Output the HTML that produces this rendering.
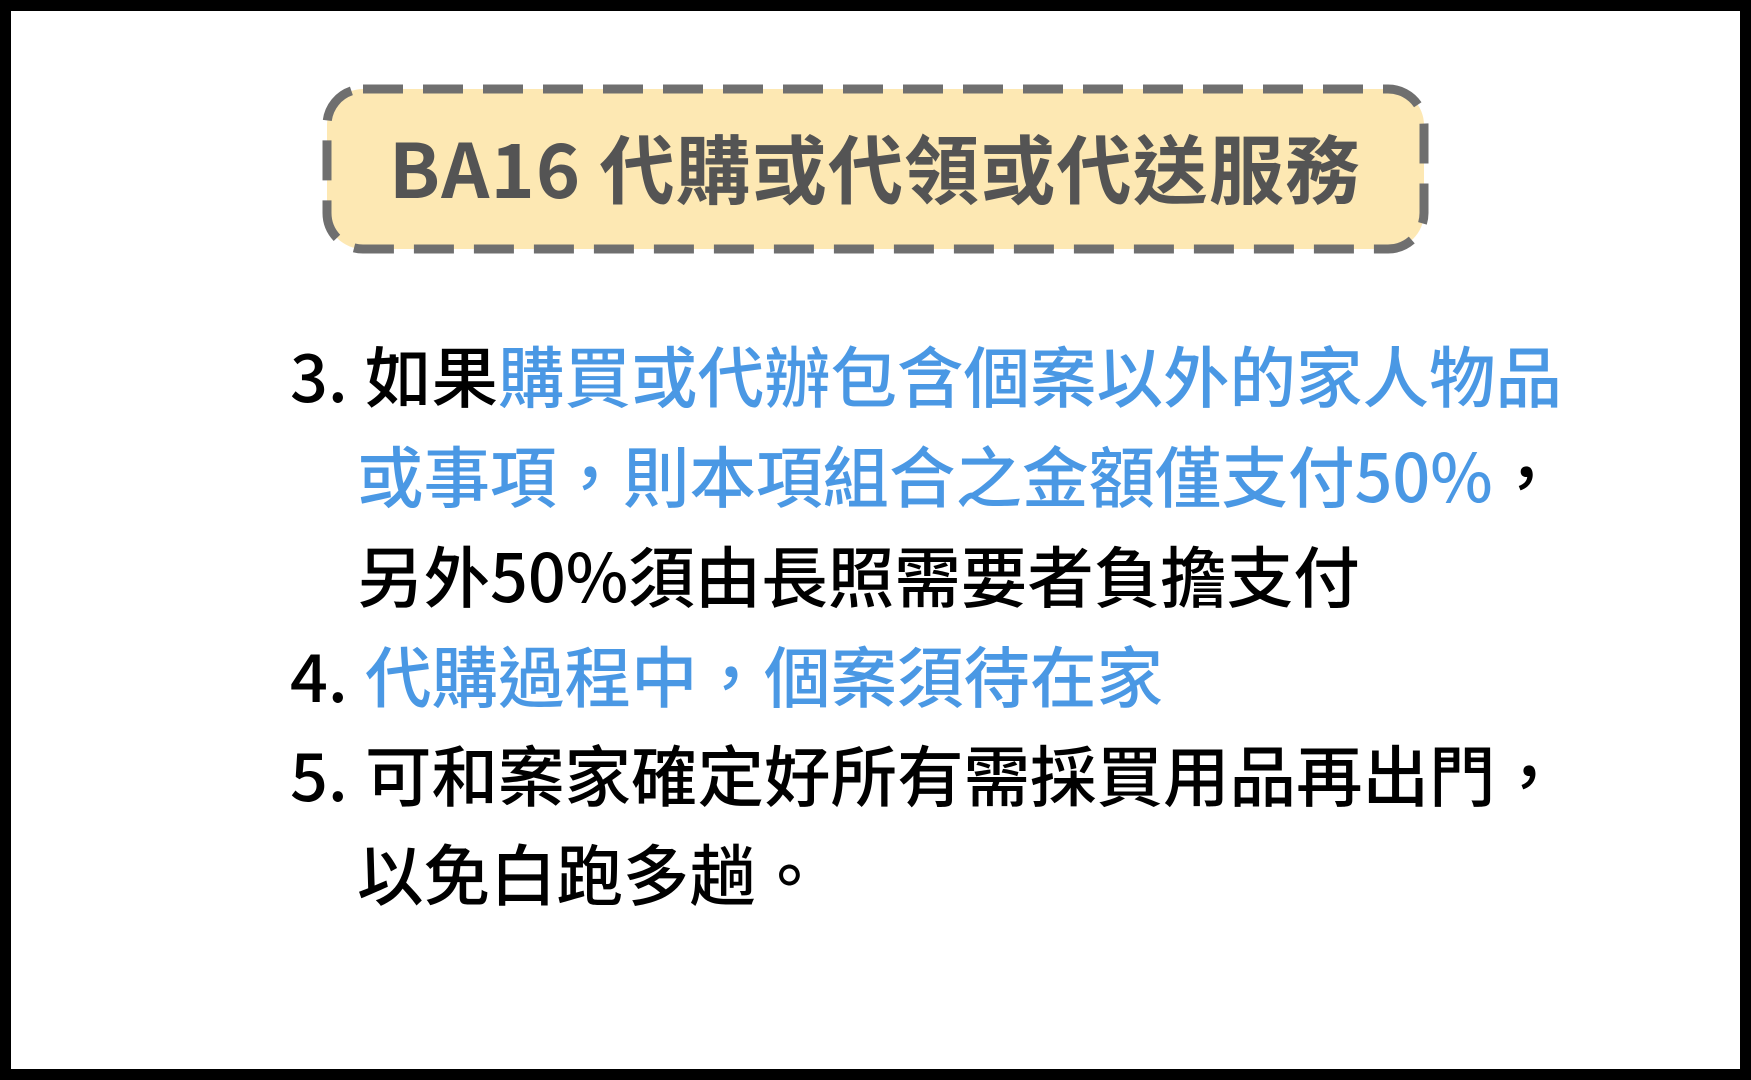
<!DOCTYPE html>
<html><head><meta charset="utf-8"><style>
html,body{margin:0;padding:0;background:#fff;}
svg{display:block;}
text{font-family:"Liberation Sans","Noto Sans CJK TC",sans-serif;}
</style></head><body>
<svg width="1751" height="1080" viewBox="0 0 1751 1080" xmlns="http://www.w3.org/2000/svg">
<rect x="0" y="0" width="1751" height="1080" fill="#000"/>
<rect x="11" y="11" width="1729" height="1058" fill="#fff"/>
<rect x="327" y="89" width="1097" height="160" rx="36" ry="36" fill="#fde8b3" stroke="#6f6f6f" stroke-width="9" stroke-dasharray="40 20"/>
<text x="389" y="198" font-size="75" font-weight="700" fill="#545454" textLength="971" lengthAdjust="spacing" style="font-family:'Noto Sans CJK TC','Liberation Sans',sans-serif">BA16 代購或代領或代送服務</text>
<g font-size="66.5" font-weight="500" fill="#000">
<text x="290" y="402" style="font-family:'Noto Sans CJK TC',sans-serif">3.</text>
<text x="365" y="402" style="font-family:'Noto Sans CJK TC',sans-serif">如果<tspan fill="#4a98e4">購買或代辦包含個案以外的家人物品</tspan></text>
<text x="357" y="502" fill="#4a98e4" style="font-family:'Noto Sans CJK TC',sans-serif">或事項，則本項組合之金額僅支付50%<tspan fill="#000">，</tspan></text>
<text x="357" y="602" style="font-family:'Noto Sans CJK TC',sans-serif">另外50%須由長照需要者負擔支付</text>
<text x="290" y="702" style="font-family:'Noto Sans CJK TC',sans-serif">4.</text>
<text x="365" y="702" fill="#4a98e4" style="font-family:'Noto Sans CJK TC',sans-serif">代購過程中，個案須待在家</text>
<text x="290" y="801" style="font-family:'Noto Sans CJK TC',sans-serif">5.</text>
<text x="365" y="801" style="font-family:'Noto Sans CJK TC',sans-serif">可和案家確定好所有需採買用品再出門，</text>
<text x="357" y="900" style="font-family:'Noto Sans CJK TC',sans-serif">以免白跑多趟。</text>
</g>
</svg>
</body></html>
